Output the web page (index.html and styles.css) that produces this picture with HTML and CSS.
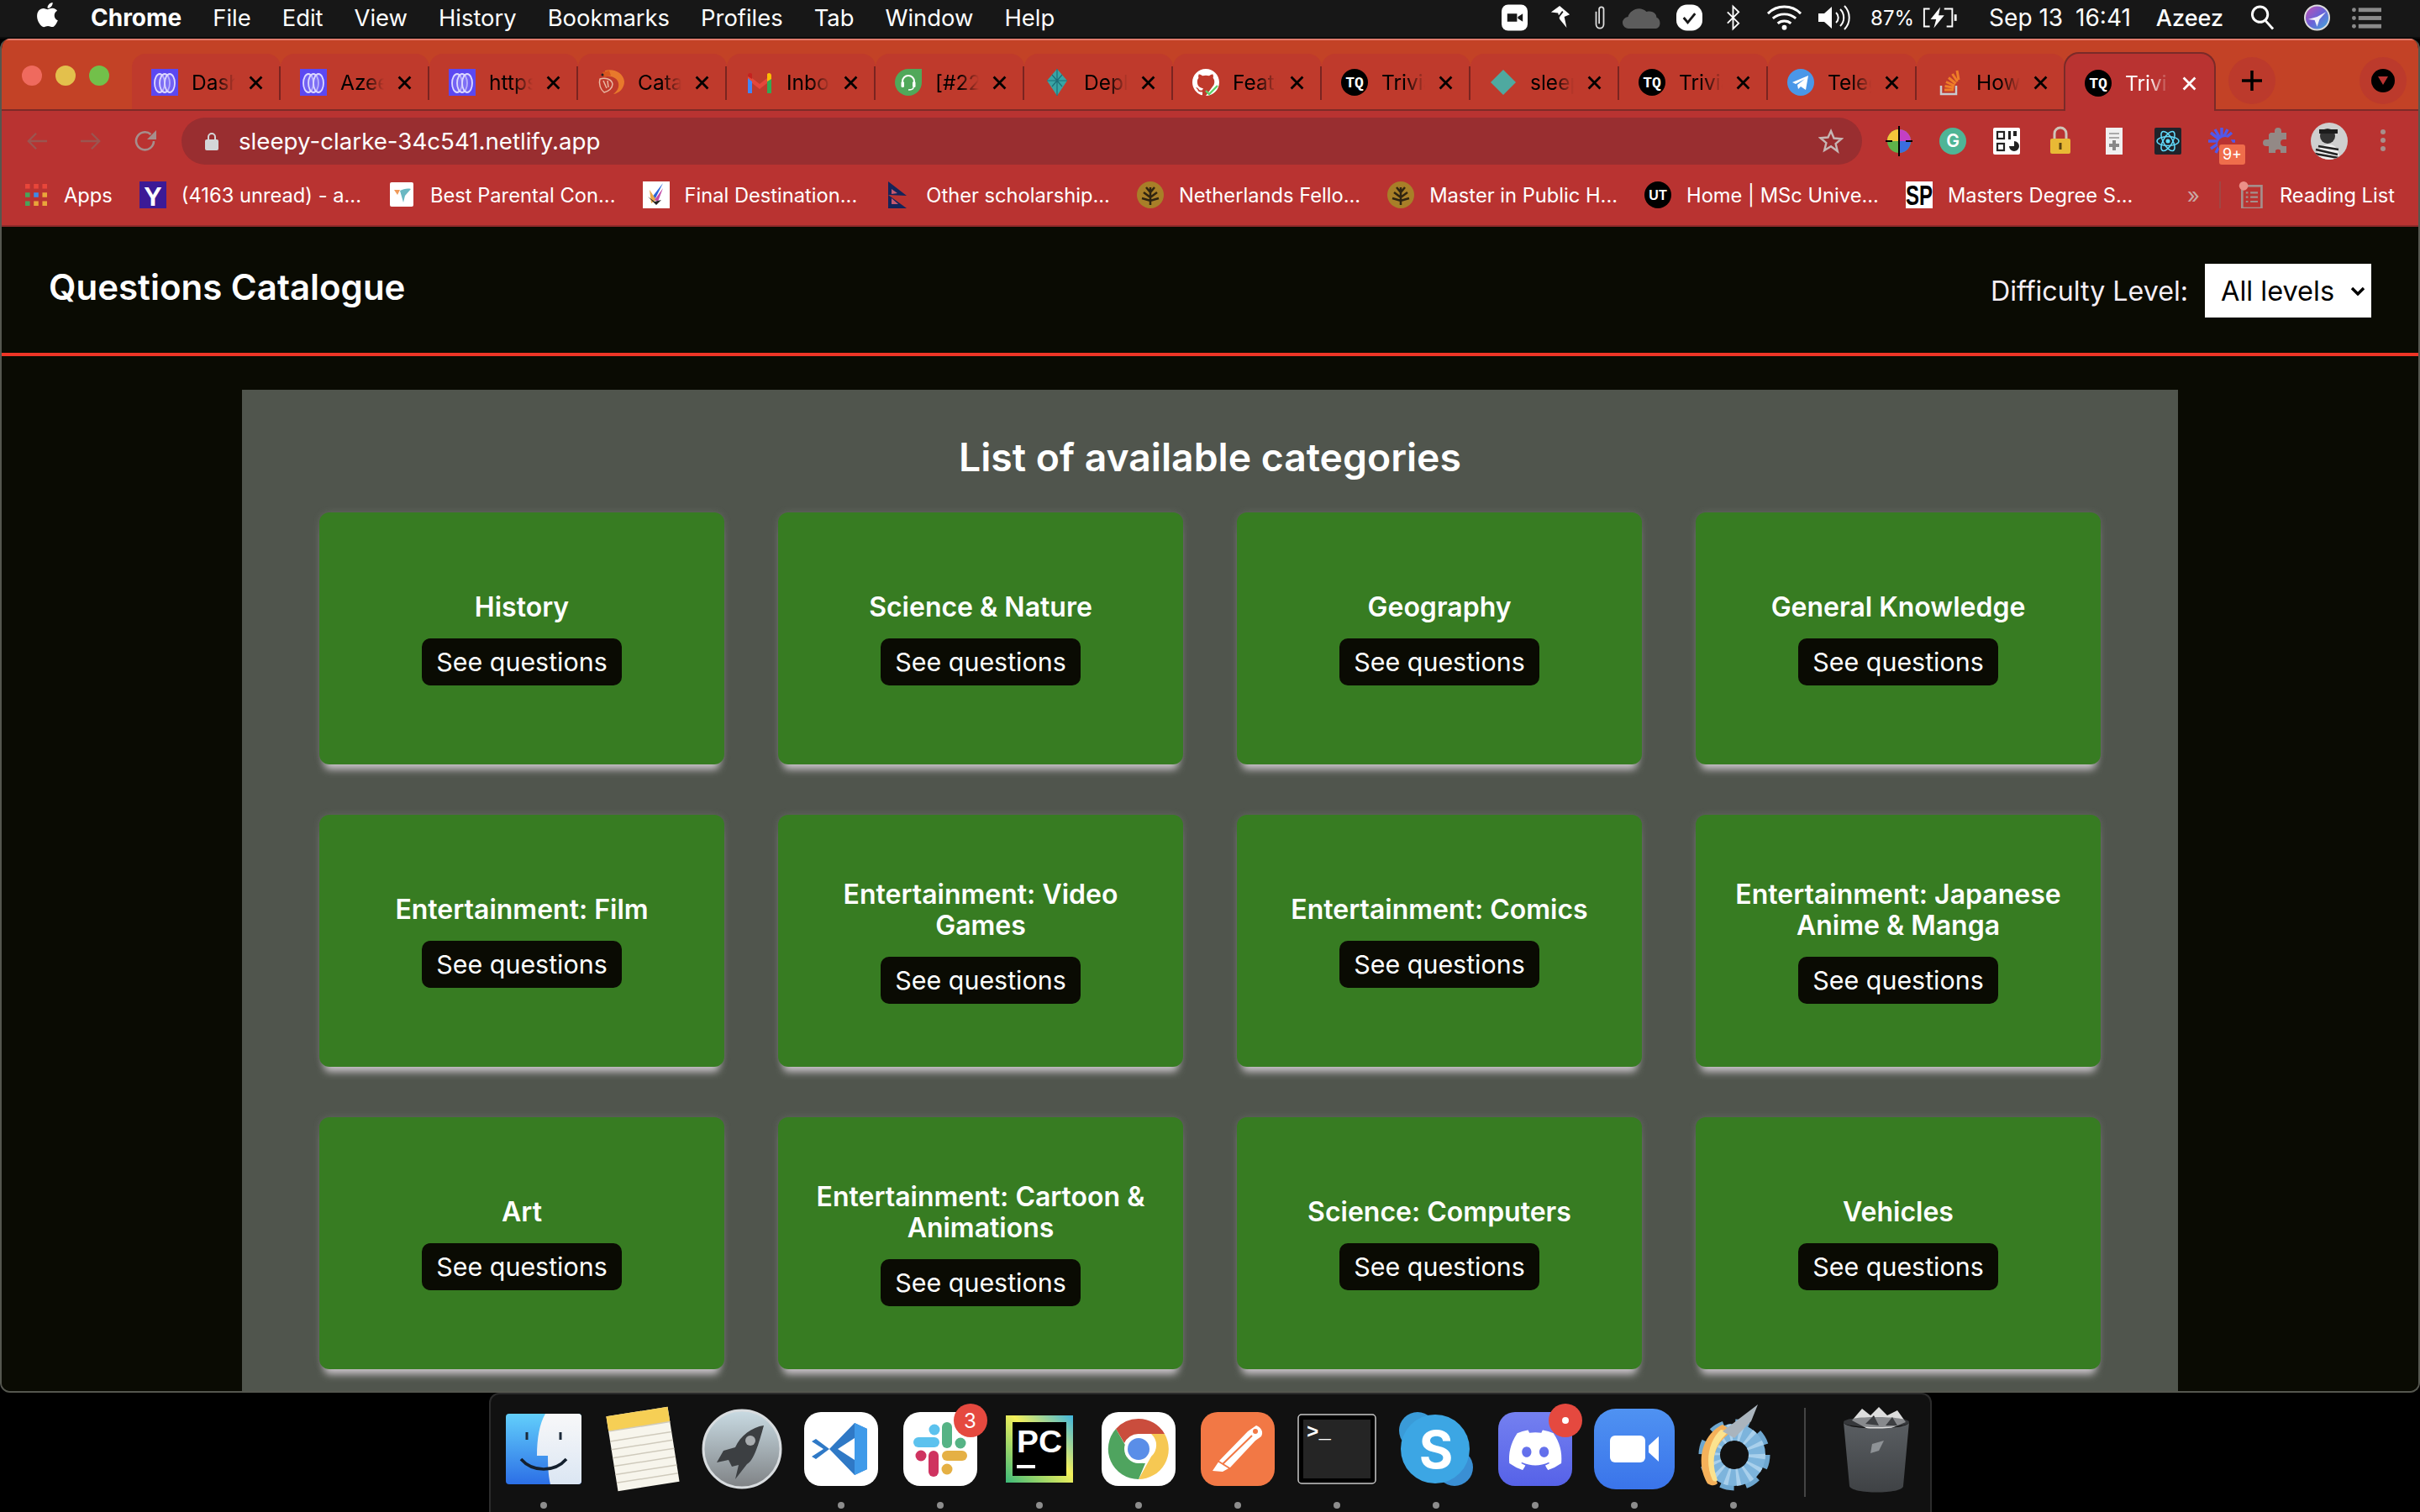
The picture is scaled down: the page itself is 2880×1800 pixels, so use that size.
FILE: index.html
```html
<!DOCTYPE html>
<html lang="en">
<head>
    <meta charset="UTF-8">
    <meta name="viewport" content="width=device-width, initial-scale=1.0">
    <title>Questions Catalogue</title>
    <link rel="stylesheet" href="styles.css">
</head>
<body>
    <svg class="defs" width="0" height="0">
        <symbol id="i-x" viewBox="0 0 16 16"><path d="M1.5 1.5l13 13M14.5 1.5l-13 13" stroke="currentColor" stroke-width="2.6" fill="none"/></symbol>
        <symbol id="i-ms" viewBox="0 0 32 32"><rect width="32" height="32" fill="#5b48f2"/><g fill="#8d80f7" fill-opacity=".45" stroke="#dcd8ff" stroke-width="1.800"><ellipse cx="10" cy="17" rx="6" ry="11"/><ellipse cx="16" cy="17" rx="6" ry="11"/><ellipse cx="22" cy="17" rx="6" ry="11"/></g></symbol>
        <symbol id="i-tq" viewBox="0 0 32 32"><circle cx="16" cy="16" r="16" fill="#000"/><text x="16" y="21.500" font-family="Liberation Mono" font-size="18" font-weight="700" fill="#fff" text-anchor="middle">TQ</text></symbol>
    </svg>

    <div class="menubar">
        <svg class="apple" viewBox="0 0 24 24"><path fill="#fff" d="M17.05 20.28c-.98.95-2.05.8-3.08.35-1.09-.46-2.09-.48-3.24 0-1.44.62-2.2.44-3.06-.35C2.79 15.25 3.51 7.59 9.05 7.31c1.35.07 2.29.74 3.08.8 1.18-.24 2.31-.93 3.57-.84 1.51.12 2.65.72 3.4 1.8-3.12 1.87-2.38 5.98.48 7.13-.57 1.5-1.31 2.99-2.54 4.09zM12.03 7.25c-.15-2.23 1.66-4.07 3.74-4.25.29 2.58-2.34 4.5-3.74 4.25z"/></svg>
        <span class="app-name">Chrome</span>
        <span>File</span>
        <span>Edit</span>
        <span>View</span>
        <span>History</span>
        <span>Bookmarks</span>
        <span>Profiles</span>
        <span>Tab</span>
        <span>Window</span>
        <span>Help</span>
        <div class="menu-right">
            <svg width="31" height="32" viewBox="0 0 32 32"><rect width="32" height="32" rx="8" fill="#fff"/><path d="M7 11h12v10H7zM20 15l6-4v10l-6-4z" fill="#171717"/></svg>
            <svg width="26" height="32" viewBox="0 0 28 32"><path d="M13 1l13 11-7 3 3 14-9-11-2-8-9-1z" fill="#fff"/><path d="M11 16l6-8" stroke="#171717" stroke-width="2"/></svg>
            <svg width="18" height="34" viewBox="0 0 20 34"><path d="M5 9v17a5 5 0 0 0 10 0V6a3 3 0 0 0-6 0v19" fill="none" stroke="#ddd" stroke-width="2"/></svg>
            <svg width="51" height="28" viewBox="0 0 48 28"><path d="M8 27a7 7 0 0 1-1-14c2-8 14-14 22-6 8-2 12 3 12 7 5 1 6 12-1 13z" fill="#5c5c5c"/></svg>
            <svg width="31" height="32" viewBox="0 0 32 32"><rect width="32" height="32" rx="13" fill="#fff"/><path d="M9 16l5 6 9-11" fill="none" stroke="#171717" stroke-width="3"/></svg>
            <svg width="19" height="34" viewBox="0 0 20 34"><path d="M3 10l14 14-7 7V3l7 7L3 24" fill="none" stroke="#fff" stroke-width="2"/></svg>
            <svg width="43" height="32" viewBox="0 0 44 32"><g fill="none" stroke="#fff" stroke-width="3"><path d="M2 11c11-11 29-11 40 0M8 17c8-7 20-7 28 0M14 23c4-4 12-4 16 0"/></g><circle cx="22" cy="28" r="3" fill="#fff"/></svg>
            <svg width="42" height="32" viewBox="0 0 42 32"><path d="M1 11h7l9-8v26l-9-8H1z" fill="#fff"/><g fill="none" stroke="#fff" stroke-width="2"><path d="M22 10a8 8 0 0 1 0 12M27 6a14 14 0 0 1 0 20M32 2a20 20 0 0 1 0 28"/></g></svg>
            <span class="battery-pct">87%</span>
            <svg width="44" height="26" viewBox="0 0 46 26"><path d="M10 2H3v22h7M28 2h10v22h-7" fill="none" stroke="#fff" stroke-width="2"/><path d="M23 0L11 15h7l-3 11 13-16h-7z" fill="#fff"/><path d="M42 9v8" stroke="#fff" stroke-width="3"/></svg>
            <span class="clock">Sep 13</span>
            <span class="clock">16:41</span>
            <span class="user">Azeez</span>
            <svg width="29" height="32" viewBox="0 0 30 32"><circle cx="12" cy="12" r="9.5" fill="none" stroke="#fff" stroke-width="3"/><path d="M19 20l9 10" stroke="#fff" stroke-width="3"/></svg>
            <svg width="31" height="32" viewBox="0 0 32 32"><defs><linearGradient id="siri-g" x1="0" y1="0" x2="1" y2="1"><stop offset="0" stop-color="#c84fb0"/><stop offset=".5" stop-color="#6a62d8"/><stop offset="1" stop-color="#3fb0d8"/></linearGradient></defs><circle cx="16" cy="16" r="15" fill="url(#siri-g)" stroke="#ddd" stroke-width="2"/><path d="M5 18l11-3 11-6-8 9-3 9-3-8z" fill="#fff" opacity=".9"/></svg>
            <svg width="35" height="28" viewBox="0 0 36 28"><g fill="#8a8a8a"><rect x="8" y="2" width="28" height="5"/><rect x="8" y="12" width="28" height="5"/><rect x="8" y="22" width="28" height="5"/><circle cx="2.500" cy="4.500" r="2.500"/><circle cx="2.500" cy="14.500" r="2.500"/><circle cx="2.500" cy="24.500" r="2.500"/></g></svg>
        </div>
    </div>

    <div class="window">
        <div class="tabstrip">
            <div class="traffic">
                <span class="light red"></span>
                <span class="light yellow"></span>
                <span class="light green"></span>
            </div>
            <div class="tabs">
                <div class="tab"><svg class="fav"><use href="#i-ms"/></svg><span class="tab-title">Dashboard</span><svg class="tab-x"><use href="#i-x"/></svg></div>
                <div class="tab"><svg class="fav"><use href="#i-ms"/></svg><span class="tab-title">Azeez</span><svg class="tab-x"><use href="#i-x"/></svg></div>
                <div class="tab"><svg class="fav"><use href="#i-ms"/></svg><span class="tab-title">https://</span><svg class="tab-x"><use href="#i-x"/></svg></div>
                <div class="tab">
                    <svg class="fav" viewBox="0 0 32 32"><path d="M9 2c11-3 22 3 23 13 0 8-6 14-13 15 5-4 7-8 6-13-1-6-8-9-15-8z" fill="#e8792c"/><path d="M6 4l8-2 2 6-8 2z" fill="#d8571f"/><path d="M3 12c6-2 14 0 15 6 0 5-5 9-10 10-4-3-7-10-5-16zM7 14l4 9M12 14l1 8" fill="none" stroke="#e9b9a4" stroke-width="1.500"/><circle cx="6" cy="7" r="1.500" fill="#222"/></svg>
                    <span class="tab-title">Catalogue</span><svg class="tab-x"><use href="#i-x"/></svg>
                </div>
                <div class="tab">
                    <svg class="fav" viewBox="0 0 32 32"><path d="M2 7l14 11L30 7v6L16 24 2 13z" fill="#e4473b"/><path d="M2 11l5 4v14H2z" fill="#4285f4"/><path d="M25 15l5-4v18h-5z" fill="#34a853"/><path d="M25 6c2-2 5-1 5 2v4l-5 3z" fill="#fbbc04"/><path d="M2 8c0-3 3-4 5-2v6L2 9z" fill="#c5221f"/></svg>
                    <span class="tab-title">Inbox</span><svg class="tab-x"><use href="#i-x"/></svg>
                </div>
                <div class="tab">
                    <svg class="fav" viewBox="0 0 32 32"><path d="M16 0h16v16a16 16 0 1 1-16-16z" fill="#50a85a"/><path d="M9 19v-4a7 7 0 0 1 14 0v4" fill="none" stroke="#fff" stroke-width="2"/><rect x="7.500" y="15" width="3.500" height="7" rx="1.500" fill="#fff"/><rect x="21" y="15" width="3.500" height="7" rx="1.500" fill="#fff"/><path d="M22 22c0 3-3 3-6 3" fill="none" stroke="#fff" stroke-width="1.500"/></svg>
                    <span class="tab-title">[#2244</span><svg class="tab-x"><use href="#i-x"/></svg>
                </div>
                <div class="tab">
                    <svg class="fav" viewBox="0 0 32 32"><path d="M16 0l12 14-12 18L4 14z" fill="#38a5a5"/><path d="M16 0v32M4 14h24M10 7l12 14M22 7L10 21" stroke="#1d6e78" stroke-width="1.200"/></svg>
                    <span class="tab-title">Deploy</span><svg class="tab-x"><use href="#i-x"/></svg>
                </div>
                <div class="tab">
                    <svg class="fav" viewBox="0 0 16 16"><path fill="#fff" d="M8 0C3.58 0 0 3.58 0 8c0 3.54 2.29 6.53 5.47 7.59.4.07.55-.17.55-.38 0-.19-.01-.82-.01-1.49-2.01.37-2.53-.49-2.69-.94-.09-.23-.48-.94-.82-1.13-.28-.15-.68-.52-.01-.53.63-.01 1.08.58 1.23.82.72 1.21 1.87.87 2.33.66.07-.52.28-.87.51-1.07-1.78-.2-3.64-.89-3.64-3.95 0-.87.31-1.59.82-2.15-.08-.2-.36-1.02.08-2.12 0 0 .67-.21 2.2.82.64-.18 1.32-.27 2-.27.68 0 1.36.09 2 .27 1.53-1.04 2.2-.82 2.2-.82.44 1.1.16 1.92.08 2.12.51.56.82 1.27.82 2.15 0 1-.2 1.700-.6 2.300L8 16c4.420 0 8-3.580 8-8s-3.580-8-8-8z"/><path d="M8 13l2 2 5-5" fill="none" stroke="#5fd068" stroke-width="1.200"/></svg>
                    <span class="tab-title">Feature</span><svg class="tab-x"><use href="#i-x"/></svg>
                </div>
                <div class="tab"><svg class="fav"><use href="#i-tq"/></svg><span class="tab-title">Trivia</span><svg class="tab-x"><use href="#i-x"/></svg></div>
                <div class="tab">
                    <svg class="fav" viewBox="0 0 32 32"><path d="M16 1l15 15-15 15L1 16z" fill="#4fa9a0"/></svg>
                    <span class="tab-title">sleepy</span><svg class="tab-x"><use href="#i-x"/></svg>
                </div>
                <div class="tab"><svg class="fav"><use href="#i-tq"/></svg><span class="tab-title">Trivia</span><svg class="tab-x"><use href="#i-x"/></svg></div>
                <div class="tab">
                    <svg class="fav" viewBox="0 0 32 32"><circle cx="16" cy="16" r="16" fill="#4a97e8"/><path d="M6 16l19-8-3 17-6-4-3 3-1-5 9-7-11 6z" fill="#fff"/></svg>
                    <span class="tab-title">Telegram</span><svg class="tab-x"><use href="#i-x"/></svg>
                </div>
                <div class="tab">
                    <svg class="fav" viewBox="0 0 32 32"><path d="M6 20v10h18V20" fill="none" stroke="#c8ccd0" stroke-width="2.500"/><g stroke="#ef7d28" stroke-width="3"><path d="M10 25h11M10.500 20.500l11 1.800M12 15.500l10 4.500M15 10.500l8.500 7M19.500 6l6 9M25 2l2 11"/></g></svg>
                    <span class="tab-title">How to</span><svg class="tab-x"><use href="#i-x"/></svg>
                </div>
                <div class="tab tab-active"><svg class="fav"><use href="#i-tq"/></svg><span class="tab-title">Trivia</span><svg class="tab-x"><use href="#i-x"/></svg></div>
            </div>
            <div class="new-tab"><svg width="24" height="24" viewBox="0 0 24 24"><path d="M12 0v24M0 12h24" stroke="#000" stroke-width="3.500"/></svg></div>
            <div class="tab-search"><span class="tab-search-dot"><svg width="12" height="10" viewBox="0 0 12 10"><path d="M0 0h12L6 10z" fill="#b93331"/></svg></span></div>
        </div>

        <div class="toolbar">
            <div class="nav-btns">
                <svg width="26" height="24" viewBox="0 0 28 24"><path d="M27 12H3M13 2L3 12l10 10" fill="none" stroke="#9b5550" stroke-width="2.500"/></svg>
                <svg width="26" height="24" viewBox="0 0 28 24"><path d="M1 12h24M15 2l10 10-10 10" fill="none" stroke="#9b5550" stroke-width="2.500"/></svg>
                <svg width="28" height="28" viewBox="0 0 28 28"><path d="M24 14a10.500 10.500 0 1 1-3.500-8" fill="none" stroke="#a68e8c" stroke-width="2.600"/><path d="M27 1v11H16z" fill="#a68e8c"/></svg>
            </div>
            <div class="omnibox">
                <svg width="16" height="22" viewBox="0 0 16 22"><path d="M4 10V6a4 4 0 0 1 8 0v4" fill="none" stroke="#d4d6d8" stroke-width="2"/><rect y="9" width="16" height="13" rx="2" fill="#d4d6d8"/></svg>
                <span class="url">sleepy-clarke-34c541.netlify.app</span>
                <svg class="star" width="30" height="30" viewBox="0 0 30 30"><path d="M15 3l3.500 8.500 9 .7-6.900 5.900 2.200 8.900L15 21.300 7.200 26l2.200-8.900-6.900-5.900 9-.7z" fill="none" stroke="#c6b6b4" stroke-width="2.400"/></svg>
            </div>
            <div class="extensions">
                <svg width="32" height="36" viewBox="0 0 32 36"><circle cx="16" cy="18" r="14" fill="#5fb34a"/><path d="M16 18V4a14 14 0 0 1 14 14z" fill="#c43fc4"/><path d="M16 18V4A14 14 0 0 0 2 18z" fill="#f4c63a"/><path d="M16 18h14a14 14 0 0 1-14 14z" fill="#3a6ee0"/><path d="M16 0v36M0 18h8M24 18h8" stroke="#000" stroke-width="2"/></svg>
                <svg width="32" height="32" viewBox="0 0 32 32"><circle cx="16" cy="16" r="16" fill="#4fb596"/><text x="16" y="23" font-family="Inter" font-size="21" font-weight="600" fill="#fff" text-anchor="middle">G</text></svg>
                <svg width="32" height="32" viewBox="0 0 32 32"><rect width="32" height="32" rx="2" fill="#fff"/><g fill="none" stroke="#222" stroke-width="2.200"><rect x="5" y="5" width="8" height="8"/><rect x="5" y="19" width="8" height="8"/></g><path d="M18 4h3v10h-3zM24 4h4v6h-4zM19 22a6 6 0 1 0 6-6v6z" fill="#222"/></svg>
                <svg width="26" height="36" viewBox="0 0 26 36"><path d="M6 16V9a7 7 0 0 1 14 0v7" fill="none" stroke="#cfc5b8" stroke-width="3"/><rect x="1" y="15" width="24" height="18" rx="2" fill="#e8b935"/><rect x="11.500" y="20" width="3" height="8" fill="#5a4210"/></svg>
                <svg width="20" height="32" viewBox="0 0 20 32"><rect width="20" height="32" fill="#f0f0f0"/><path d="M4 7h12M4 12h12" stroke="#aaa" stroke-width="2"/><path d="M10 15v12M4 21h12" stroke="#888" stroke-width="4"/></svg>
                <svg width="32" height="32" viewBox="0 0 32 32"><rect width="32" height="32" rx="2" fill="#20232a"/><g fill="none" stroke="#61dafb" stroke-width="1.500"><ellipse cx="16" cy="16" rx="13" ry="5.500"/><ellipse cx="16" cy="16" rx="13" ry="5.500" transform="rotate(60 16 16)"/><ellipse cx="16" cy="16" rx="13" ry="5.500" transform="rotate(120 16 16)"/></g><circle cx="16" cy="16" r="2.500" fill="#61dafb"/></svg>
                <span class="ext-hub">
                    <svg width="32" height="32" viewBox="0 0 32 32"><g stroke="#5158ea" stroke-width="3.500"><path d="M16 16V0M16 16l7-14M16 16l12-10M16 16H32M16 16H0M16 16L3 6M16 16L8 2M16 16L3 25M16 16L9 30"/></g><circle cx="20" cy="20" r="9" fill="#b93331"/></svg>
                    <span class="ext-badge">9+</span>
                </span>
                <svg width="30" height="32" viewBox="0 0 30 32"><path d="M9 6h5V4a4 4 0 0 1 8 0v2h6v8h-3a4 4 0 0 0 0 8h3v8h-7v-3a4 4 0 0 0-6 0v3H7v-8H4a4 4 0 0 1 0-8h3V8z" fill="#938986"/></svg>
                <svg width="44" height="44" viewBox="0 0 44 44"><clipPath id="av-clip"><circle cx="22" cy="22" r="22"/></clipPath><g clip-path="url(#av-clip)"><rect width="44" height="44" fill="#cfcfcf"/><circle cx="20" cy="16" r="9" fill="#333"/><path d="M6 44c0-12 8-18 16-18s12 8 12 18z" fill="#eee"/><path d="M6 32l26 6M5 37l28 5M9 28l24 4" stroke="#222" stroke-width="2.500"/><path d="M10 8h22v5H10z" fill="#1c1c1c"/></g></svg>
                <svg width="8" height="32" viewBox="0 0 8 32"><g fill="#a88f8c"><circle cx="4" cy="5" r="3"/><circle cx="4" cy="15" r="3"/><circle cx="4" cy="25" r="3"/></g></svg>
            </div>
        </div>

        <div class="bookmarks">
            <div class="bm bm-apps">
                <svg class="bm-icon" viewBox="0 0 28 28"><g><rect width="6" height="6" fill="#e8463a"/><rect x="11" width="6" height="6" fill="#e8463a"/><rect x="22" width="6" height="6" fill="#e8463a"/><rect y="11" width="6" height="6" fill="#4aa35a"/><rect x="11" y="11" width="6" height="6" fill="#3f8ae6"/><rect x="22" y="11" width="6" height="6" fill="#eaa53a"/><rect y="22" width="6" height="6" fill="#4aa35a"/><rect x="11" y="22" width="6" height="6" fill="#eaa53a"/><rect x="22" y="22" width="6" height="6" fill="#eaa53a"/></g></svg>
                <span>Apps</span>
            </div>
            <div class="bm">
                <svg class="bm-icon" viewBox="0 0 32 32"><rect width="32" height="32" fill="#3c1a96"/><text x="16" y="29" font-family="Liberation Sans" font-size="32" font-weight="700" fill="#fff" text-anchor="middle">Y</text></svg>
                <span>(4163 unread) - a...</span>
            </div>
            <div class="bm">
                <svg class="bm-icon" viewBox="0 0 32 32"><rect x="2" y="1" width="28" height="29" rx="2" fill="#fff"/><path d="M7 10h7l-3 6z" fill="#ef9a5a"/><path d="M14 11c4-2 9-3 13-2l-7 8-2 8z" fill="#6ab8c2"/></svg>
                <span>Best Parental Con...</span>
            </div>
            <div class="bm">
                <svg class="bm-icon" viewBox="0 0 32 32"><rect width="32" height="32" fill="#fff"/><path d="M24 2L10 20l4 2z" fill="#2a64d8"/><path d="M8 10l8 12-6 4z" fill="#e8a94a"/><path d="M24 8l-6 16-4-2z" fill="#c34ca8"/><path d="M6 18l8 6 8-2-6 6z" fill="#222"/></svg>
                <span>Final Destination...</span>
            </div>
            <div class="bm">
                <svg class="bm-icon" viewBox="0 0 32 32"><path d="M5 0l22 17L5 16zM5 16l22 16H5z" fill="#14245a"/><path d="M9 9l7 5-7 1zM9 20l8 7H9z" fill="#c45a70"/></svg>
                <span>Other scholarship...</span>
            </div>
            <div class="bm">
                <svg class="bm-icon" viewBox="0 0 32 32"><circle cx="16" cy="16" r="16" fill="#a87f28"/><path d="M16 7v21M8 13l8 6 8-6M11 7l5 6 5-6M6 20l10 3 10-3" fill="none" stroke="#2f2410" stroke-width="2.500"/></svg>
                <span>Netherlands Fello...</span>
            </div>
            <div class="bm">
                <svg class="bm-icon" viewBox="0 0 32 32"><circle cx="16" cy="16" r="16" fill="#a87f28"/><path d="M16 7v21M8 13l8 6 8-6M11 7l5 6 5-6M6 20l10 3 10-3" fill="none" stroke="#2f2410" stroke-width="2.500"/></svg>
                <span>Master in Public H...</span>
            </div>
            <div class="bm">
                <svg class="bm-icon" viewBox="0 0 32 32"><circle cx="16" cy="16" r="16" fill="#000"/><text x="16" y="22" font-family="Liberation Sans" font-size="16" font-weight="700" fill="#fff" text-anchor="middle">UT</text></svg>
                <span>Home | MSc Unive...</span>
            </div>
            <div class="bm">
                <svg class="bm-icon" viewBox="0 0 32 32"><rect width="32" height="32" fill="#fff"/><text x="16" y="28" font-family="Liberation Sans" font-size="33" font-weight="700" fill="#000" text-anchor="middle" textLength="32" lengthAdjust="spacingAndGlyphs">SP</text></svg>
                <span>Masters Degree S...</span>
            </div>
            <span class="bm-more">»</span>
            <div class="bm bm-reading">
                <svg class="bm-icon" viewBox="0 0 32 36"><rect x="4" y="6" width="26" height="30" fill="none" stroke="#a58f8c" stroke-width="3"/><path d="M15 15h10M15 21h10M15 27h10M9 15h3M9 21h3M9 27h3" stroke="#a58f8c" stroke-width="2.500"/><circle cx="6" cy="6" r="6" fill="#ec9088"/></svg>
                <span>Reading List</span>
            </div>
        </div>

        <div class="page">
            <header class="page-header">
                <h1>Questions Catalogue</h1>
                <div class="filter">
                    <label for="difficulty">Difficulty Level:</label>
                    <div class="select-wrap">
                        <select id="difficulty">
                            <option>All levels</option>
                        </select>
                        <svg class="chevron" width="18" height="11" viewBox="0 0 18 11"><path d="M2 2l7 7 7-7" fill="none" stroke="#000" stroke-width="3.400"/></svg>
                    </div>
                </div>
            </header>
            <main class="panel">
                <h2>List of available categories</h2>
                <div class="grid">
                    <div class="card"><h3>History</h3><button>See questions</button></div>
                    <div class="card"><h3>Science &amp; Nature</h3><button>See questions</button></div>
                    <div class="card"><h3>Geography</h3><button>See questions</button></div>
                    <div class="card"><h3>General Knowledge</h3><button>See questions</button></div>
                    <div class="card"><h3>Entertainment: Film</h3><button>See questions</button></div>
                    <div class="card"><h3>Entertainment: Video Games</h3><button>See questions</button></div>
                    <div class="card"><h3>Entertainment: Comics</h3><button>See questions</button></div>
                    <div class="card"><h3>Entertainment: Japanese Anime &amp; Manga</h3><button>See questions</button></div>
                    <div class="card"><h3>Art</h3><button>See questions</button></div>
                    <div class="card"><h3>Entertainment: Cartoon &amp; Animations</h3><button>See questions</button></div>
                    <div class="card"><h3>Science: Computers</h3><button>See questions</button></div>
                    <div class="card"><h3>Vehicles</h3><button>See questions</button></div>
                </div>
            </main>
        </div>
    </div>

    <div class="dock">
        <div class="dock-item on">
            <div class="dock-icon"><svg width="90" height="84" viewBox="0 0 90 84"><defs><linearGradient id="fd-a" x1="0" y1="0" x2="0" y2="1"><stop offset="0" stop-color="#62cffb"/><stop offset="1" stop-color="#2c6fe6"/></linearGradient><linearGradient id="fd-b" x1="0" y1="0" x2="0" y2="1"><stop offset="0" stop-color="#f8f8f9"/><stop offset="1" stop-color="#dbe6f3"/></linearGradient></defs><rect width="90" height="84" rx="4" fill="url(#fd-a)"/><path d="M47 0h39a4 4 0 0 1 4 4v76a4 4 0 0 1-4 4H53c-2-8-3-18-3-34H37c0-20 3-38 10-50z" fill="url(#fd-b)"/><path d="M25 22v9M65 22v9" stroke="#1c2a3a" stroke-width="3"/><path d="M18 54c14 16 40 16 54 0" fill="none" stroke="#14202e" stroke-width="3.500"/></svg></div>
            <span class="dock-dot"></span>
        </div>
        <div class="dock-item">
            <div class="dock-icon"><svg width="90" height="102" viewBox="0 0 90 102"><g transform="rotate(-9 45 51)"><rect x="8" y="6" width="74" height="90" fill="#f7f5ec"/><rect x="8" y="6" width="74" height="18" fill="#f6cf55"/><path d="M8 24h74M8 36h74M8 46h74M8 56h74M8 66h74M8 76h74M8 86h74" stroke="#cfcabc" stroke-width="1.500"/></g></svg></div>
            <span class="dock-dot"></span>
        </div>
        <div class="dock-item">
            <div class="dock-icon"><svg width="96" height="96" viewBox="0 0 96 96"><defs><linearGradient id="lp-g" x1="0" y1="0" x2="0" y2="1"><stop offset="0" stop-color="#c9dbe3"/><stop offset="1" stop-color="#7f8285"/></linearGradient></defs><circle cx="48" cy="48" r="46" fill="url(#lp-g)" stroke="#d8dcdf" stroke-width="3"/><path d="M74 20c-14 2-28 12-34 26l-14 4-8 14 14-3 4 8 8-2-4 17 14-18c8-4 14-24 20-46z" fill="#3c3f42"/><circle cx="58" cy="38" r="6" fill="#a9adb0"/></svg></div>
            <span class="dock-dot"></span>
        </div>
        <div class="dock-item on">
            <div class="dock-icon"><svg width="88" height="88" viewBox="0 0 88 88"><rect width="88" height="88" rx="20" fill="#fff"/><path d="M60 13L30 44 14 32l-5 3 14 9-14 9 5 3 16-12 30 31 15-7V20z" fill="#2f79c6"/><path d="M60 13l15 7v48l-15 7z" fill="#3f9ae9"/><path d="M60 31L40 44l20 13z" fill="#fff"/></svg></div>
            <span class="dock-dot"></span>
        </div>
        <div class="dock-item on">
            <div class="dock-icon"><svg width="88" height="88" viewBox="0 0 88 88"><rect width="88" height="88" rx="20" fill="#fff"/><g stroke-width="12" stroke-linecap="round" fill="none"><path d="M37 21v0" stroke="#5cc2ee" stroke-width="13"/><path d="M18 36h19" stroke="#5cc2ee"/><path d="M52 18v19" stroke="#55b385"/><path d="M68 37v0" stroke="#55b385" stroke-width="13"/><path d="M21 52v0" stroke="#cf3360" stroke-width="13"/><path d="M36 52v19" stroke="#cf3360"/><path d="M52 52h18" stroke="#e5b044"/><path d="M52 68v0" stroke="#e5b044" stroke-width="13"/></g></svg></div>
            <span class="dock-badge">3</span>
            <span class="dock-dot"></span>
        </div>
        <div class="dock-item on">
            <div class="dock-icon"><svg width="80" height="80" viewBox="0 0 80 80"><defs><linearGradient id="pc-g" x1="0" y1="1" x2="1" y2="0"><stop offset="0" stop-color="#3bb97a"/><stop offset=".55" stop-color="#f5f05a"/><stop offset="1" stop-color="#3fb6e0"/></linearGradient></defs><rect width="80" height="80" fill="url(#pc-g)"/><rect x="8" y="8" width="64" height="64" fill="#000"/><text x="13" y="44" font-family="Liberation Sans" font-size="36" font-weight="700" fill="#fff" textLength="54" lengthAdjust="spacingAndGlyphs">PC</text><rect x="13" y="59" width="22" height="4" fill="#fff"/></svg></div>
            <span class="dock-dot"></span>
        </div>
        <div class="dock-item on">
            <div class="dock-icon"><svg width="88" height="88" viewBox="0 0 88 88"><rect width="88" height="88" rx="20" fill="#fff"/><path d="M44 8a36 36 0 0 1 31 18H44a18 18 0 0 0-17 11L17 20A36 36 0 0 1 44 8z" fill="#ca4d3d"/><path d="M75 26a36 36 0 0 1-31 54l15-27a18 18 0 0 0 0-27z" fill="#f6c853"/><path d="M17 20l16 28a18 18 0 0 0 19 13L44 80A36 36 0 0 1 17 20z" fill="#4fa45f"/><circle cx="44" cy="44" r="17" fill="#fff"/><circle cx="44" cy="44" r="13" fill="#5a8ee8"/></svg></div>
            <span class="dock-dot"></span>
        </div>
        <div class="dock-item on">
            <div class="dock-icon"><svg width="88" height="88" viewBox="0 0 88 88"><rect width="88" height="88" rx="20" fill="#f27845"/><path d="M66 16c6 2 9 8 6 13l-7 5-30 32-9 5-12-1 8-12 34-35z" fill="#fff"/><path d="M26 62l35-34M36 68L20 58" stroke="#f27845" stroke-width="2"/><circle cx="65" cy="23" r="3" fill="#f27845"/></svg></div>
            <span class="dock-dot"></span>
        </div>
        <div class="dock-item on">
            <div class="dock-icon"><svg width="94" height="84" viewBox="0 0 94 84"><rect x="1" y="1" width="92" height="82" rx="4" fill="#000" stroke="#c8c8c8" stroke-width="1.500"/><rect x="7" y="7" width="80" height="70" fill="#252525"/><text x="11" y="29" font-family="Liberation Mono" font-size="24" font-weight="700" fill="#fff">&gt;_</text></svg></div>
            <span class="dock-dot"></span>
        </div>
        <div class="dock-item on">
            <div class="dock-icon"><svg width="88" height="88" viewBox="0 0 88 88"><circle cx="22" cy="22" r="22" fill="#3a9bd8"/><circle cx="66" cy="66" r="22" fill="#3a8fd4"/><circle cx="43" cy="44" r="41" fill="#3ca6e4"/><text x="44" y="67" font-family="Inter" font-size="62" font-weight="700" fill="#fff" text-anchor="middle">S</text></svg></div>
            <span class="dock-dot"></span>
        </div>
        <div class="dock-item on">
            <div class="dock-icon"><svg width="88" height="88" viewBox="0 0 88 88"><defs><linearGradient id="dc-g" x1="0" y1="0" x2="0" y2="1"><stop offset="0" stop-color="#7480f0"/><stop offset="1" stop-color="#5662e8"/></linearGradient></defs><rect width="88" height="88" rx="20" fill="url(#dc-g)"/><g transform="translate(13 14) scale(2.600)"><path fill="#fff" d="M20.317 4.37a19.791 19.791 0 0 0-4.885-1.515.074.074 0 0 0-.079.037c-.21.375-.444.864-.608 1.25a18.27 18.27 0 0 0-5.487 0 12.64 12.64 0 0 0-.617-1.25.077.077 0 0 0-.079-.037A19.736 19.736 0 0 0 3.677 4.37a.07.07 0 0 0-.032.027C.533 9.046-.32 13.58.099 18.057a.082.082 0 0 0 .031.057 19.9 19.9 0 0 0 5.993 3.03.078.078 0 0 0 .084-.028 14.09 14.09 0 0 0 1.226-1.994.076.076 0 0 0-.041-.106 13.107 13.107 0 0 1-1.872-.892.077.077 0 0 1-.008-.128 10.2 10.2 0 0 0 .372-.292.074.074 0 0 1 .077-.01c3.928 1.793 8.18 1.793 12.062 0a.074.074 0 0 1 .078.01c.12.098.246.198.373.292a.077.077 0 0 1-.006.127 12.299 12.299 0 0 1-1.873.892.077.077 0 0 0-.041.107c.36.698.772 1.362 1.225 1.993a.076.076 0 0 0 .084.028 19.839 19.839 0 0 0 6.002-3.03.077.077 0 0 0 .032-.054c.5-5.177-.838-9.674-3.549-13.66a.061.061 0 0 0-.031-.03zM8.02 15.33c-1.183 0-2.157-1.085-2.157-2.419 0-1.333.956-2.419 2.157-2.419 1.21 0 2.176 1.096 2.157 2.42 0 1.333-.956 2.418-2.157 2.418zm7.975 0c-1.183 0-2.157-1.085-2.157-2.419 0-1.333.955-2.419 2.157-2.419 1.21 0 2.176 1.096 2.157 2.42 0 1.333-.946 2.418-2.157 2.418z"/></g></svg></div>
            <span class="dock-badge dock-badge-dot"></span>
            <span class="dock-dot"></span>
        </div>
        <div class="dock-item on">
            <div class="dock-icon"><svg width="96" height="96" viewBox="0 0 96 96"><defs><linearGradient id="zm-g" x1="0" y1="0" x2="0" y2="1"><stop offset="0" stop-color="#4f92f2"/><stop offset="1" stop-color="#3a74ea"/></linearGradient></defs><rect width="96" height="96" rx="26" fill="url(#zm-g)"/><rect x="19" y="32" width="42" height="32" rx="6" fill="#fff"/><path d="M65 44l12-11v30L65 52z" fill="#fff"/></svg></div>
            <span class="dock-dot"></span>
        </div>
        <div class="dock-item on">
            <div class="dock-icon"><svg width="98" height="110" viewBox="0 0 98 110"><circle cx="50" cy="62" r="38" fill="none" stroke="#6ea7d0" stroke-width="9" stroke-dasharray="16 14"/><circle cx="50" cy="62" r="27" fill="none" stroke="#7db4dc" stroke-width="20"/><circle cx="50" cy="62" r="27" fill="none" stroke="#a9d0ec" stroke-width="20" stroke-dasharray="4 8"/><path d="M36 26C14 36 2 68 18 96c6 4 10 2 12 0-10-22-6-48 18-62z" fill="#f5b15a"/><path d="M34 32C20 44 14 70 24 92c2 2 4 2 6 0-8-20-6-42 14-58z" fill="#fbe28e"/><path d="M36 34L78 2 70 22 50 42z" fill="#aab4bd"/></svg></div>
            <span class="dock-dot"></span>
        </div>
        <div class="dock-sep"></div>
        <div class="dock-item">
            <div class="dock-icon"><svg width="78" height="104" viewBox="0 0 78 104"><defs><linearGradient id="tr-g" x1="0" y1="0" x2="0" y2="1"><stop offset="0" stop-color="#5a5e62"/><stop offset="1" stop-color="#3f4245"/></linearGradient></defs><path d="M10 18l12-14 10 8 10-10 10 10 12-6 10 14-34 14z" fill="#ddd"/><path d="M26 22l10-10 6 12zM50 24l8-10 6 10z" fill="#222"/><path d="M0 20c0 10 78 10 78 0l-7 76c0 10-62 10-64 0z" fill="url(#tr-g)"/><path d="M0 20c0-8 78-8 78 0s-78 8-78 0z" fill="#505459" opacity=".6"/><path d="M34 46l14-4-6 12-10 3z" fill="#8e9296"/></svg></div>
            <span class="dock-dot"></span>
        </div>
    </div>
</body>
</html>
```

FILE: styles.css
```css
* {
    box-sizing: border-box;
}
html, body {
    height: 100%;
}
body {
    margin: 0;
    display: flex;
    flex-direction: column;
    height: 1800px;
    overflow: hidden;
    background: #000;
    font-family: Inter, "Noto Sans", sans-serif;
    color: #fff;
}
.defs {
    position: absolute;
}

/* mac menu bar */
.menubar {
    display: flex;
    align-items: center;
    flex: 0 0 46px;
    height: 46px;
    padding: 0 46px 2px 37px;
    background: #171717;
    border-bottom: 2px solid #0c0c0c;
    font-size: 27.400px;
    gap: 37px;
}
.apple {
    width: 39px;
    height: 39px;
    margin: -7px -5px 0 0;
}
.app-name {
    font-size: 28px;
    font-weight: 700;
}
.menu-right {
    display: flex;
    align-items: center;
    margin-left: auto;
    font-size: 27px;
}
.menu-right > :nth-child(2) { margin-left: 26px; }
.menu-right > :nth-child(3) { margin-left: 25px; }
.menu-right > :nth-child(4) { margin-left: 16px; }
.menu-right > :nth-child(5) { margin-left: 15px; }
.menu-right > :nth-child(6) { margin-left: 27px; }
.menu-right > :nth-child(7) { margin-left: 30px; }
.menu-right > :nth-child(8) { margin-left: 18px; }
.menu-right > :nth-child(9) { margin-left: 21px; }
.menu-right > :nth-child(10) { margin-left: 9px; }
.menu-right > :nth-child(11) { margin-left: 36px; }
.menu-right > :nth-child(12) { margin-left: 15px; }
.menu-right > :nth-child(13) { margin-left: 30px; }
.menu-right > :nth-child(14) { margin-left: 32px; }
.menu-right > :nth-child(15) { margin-left: 35px; }
.menu-right > :nth-child(16) { margin-left: 26px; }
.battery-pct {
    font-size: 24px;
}
.clock {
    font-size: 28px;
}
.user {
    font-weight: 500;
}

/* browser window */
.window {
    flex: 0 0 1612px;
    display: flex;
    flex-direction: column;
    overflow: hidden;
    border-radius: 12px;
    border: 2px solid #55574f;
    border-top: 0;
    background: #0a0b03;
}
.tabstrip {
    display: flex;
    flex: 0 0 86px;
    height: 86px;
    background: #c34226;
    border-top: 2px solid #e0796a;
    border-bottom: 2px solid #7e2a27;
    position: relative;
}
.traffic {
    display: flex;
    align-items: center;
    gap: 16px;
    width: 155px;
    height: 84px;
    padding-left: 24px;
}
.light {
    width: 24px;
    height: 24px;
    border-radius: 50%;
}
.red { background: #ef6a5e; }
.yellow { background: #e3c04c; }
.green { background: #72c04a; }

.tabs {
    display: flex;
    align-items: flex-end;
    height: 82px;
}
.tab {
    display: flex;
    align-items: center;
    position: relative;
    width: 177px;
    height: 66px;
    padding: 2px 22px 0 23px;
    border-radius: 16px 16px 0 0;
    background: #bf3a2c;
    color: #000;
}
.tab:not(:nth-last-child(-n+2))::after {
    content: "";
    position: absolute;
    right: 0;
    top: 15px;
    height: 40px;
    width: 2px;
    background: #7a2420;
}
.fav {
    flex: 0 0 32px;
    width: 32px;
    height: 32px;
}
.tab-title {
    flex: 0 0 52px;
    width: 52px;
    margin-left: 16px;
    overflow: hidden;
    white-space: nowrap;
    font-size: 24.500px;
    -webkit-mask-image: linear-gradient(90deg, #000 55%, transparent);
    mask-image: linear-gradient(90deg, #000 55%, transparent);
}
.tab-x {
    flex: 0 0 17px;
    width: 17px;
    height: 17px;
    margin-left: 16px;
}
.tab-active {
    height: 68px;
    margin-bottom: -2px;
    background: #b93331;
    color: #fff;
    box-shadow: 0 0 0 2px #7a2a28;
    clip-path: inset(-3px -3px 0 -3px);
}
.new-tab {
    position: absolute;
    left: 2650px;
    top: 20px;
    display: flex;
    align-items: center;
    justify-content: center;
    width: 56px;
    height: 56px;
    border-radius: 50%;
    background: #bc3a2c;
}
.tab-search {
    position: absolute;
    left: 2806px;
    top: 20px;
    display: flex;
    align-items: center;
    justify-content: center;
    width: 56px;
    height: 56px;
    border-radius: 50%;
    background: #bc3a2c;
}
.tab-search-dot {
    display: flex;
    align-items: center;
    justify-content: center;
    width: 28px;
    height: 28px;
    border-radius: 50%;
    background: #000;
}

/* toolbar */
.toolbar {
    display: flex;
    align-items: center;
    flex: 0 0 72px;
    height: 72px;
    background: #b93331;
}
.nav-btns {
    display: flex;
    align-items: center;
    gap: 38px;
    width: 214px;
    padding-left: 29px;
}
.omnibox {
    display: flex;
    align-items: center;
    flex: 0 0 2000px;
    height: 56px;
    padding: 0 22px 0 28px;
    border-radius: 28px;
    background: #992e30;
}
.url {
    margin-left: 24px;
    font-size: 27.700px;
}
.star {
    margin-left: auto;
}
.extensions {
    display: grid;
    grid-template-columns: repeat(10, 64px);
    align-items: center;
    justify-items: center;
    padding-left: 12px;
}
.ext-hub {
    position: relative;
    display: flex;
}
.ext-badge {
    position: absolute;
    left: 13px;
    top: 20px;
    width: 31px;
    height: 24px;
    border-radius: 3px;
    background: #ef6d4b;
    font-size: 18px;
    line-height: 24px;
    text-align: center;
}

/* bookmarks */
.bookmarks {
    display: flex;
    align-items: center;
    flex: 0 0 66px;
    height: 66px;
    padding: 0 0 8px 28px;
    background: #b93331;
    border-bottom: 2px solid #8f2a2a;
    font-size: 23.700px;
    gap: 32px;
}
.bm {
    display: flex;
    align-items: center;
    gap: 18px;
    white-space: nowrap;
}
.bm-icon {
    width: 32px;
    height: 32px;
    flex: 0 0 32px;
}
.bm-apps {
    gap: 20px;
}
.bm-apps .bm-icon {
    width: 26px;
    height: 26px;
    flex-basis: 26px;
}
.bm-more {
    margin: 0 -9px 0 auto;
    color: #c9a9a5;
    font-size: 26px;
}
.bm-reading {
    padding-left: 20px;
    padding-right: 28px;
    border-left: 2px solid #a04744;
}

/* the page itself */
.page {
    flex: 1;
    min-height: 0;
    overflow: hidden;
    background: #0a0b03;
}
.page-header {
    display: flex;
    align-items: center;
    justify-content: space-between;
    height: 154px;
    padding: 0 56px 8px;
    border-bottom: 4px solid #ee3526;
}
h1 {
    margin: 0;
    font-size: 42px;
    font-weight: 600;
}
.filter {
    display: flex;
    align-items: center;
    gap: 20px;
    margin-top: 10px;
    font-size: 32.200px;
    color: #f5eef5;
}
.select-wrap {
    position: relative;
    display: flex;
}
.filter select {
    width: 198px;
    height: 64px;
    padding: 0 0 0 19px;
    border: 0;
    border-radius: 0;
    background: #fff;
    color: #000;
    font-family: inherit;
    font-size: 32.500px;
    appearance: none;
    -webkit-appearance: none;
}
.chevron {
    position: absolute;
    right: 7px;
    top: 27px;
    pointer-events: none;
}
.panel {
    width: 2304px;
    margin: 40px auto 0;
    padding: 0 92px 60px;
    background: #50554d;
}
h2 {
    display: flex;
    align-items: center;
    justify-content: center;
    margin: 0;
    height: 146px;
    padding-top: 14px;
    font-size: 46.300px;
    font-weight: 600;
}
.grid {
    display: grid;
    grid-template-columns: repeat(4, 482px);
    gap: 60px 64px;
}
.card {
    display: flex;
    flex-direction: column;
    align-items: center;
    justify-content: center;
    height: 300px;
    padding: 0 40px;
    border-radius: 12px;
    background: #377c22;
    box-shadow: 0 12px 10px -6px #c9c3c9, 0 0 8px rgba(190, 190, 190, 0.18);
}
h3 {
    margin: 0 0 19px;
    font-size: 32px;
    line-height: 37px;
    font-weight: 600;
    text-align: center;
}
.card button {
    height: 56px;
    padding: 0 17px;
    border: 0;
    border-radius: 10px;
    background: #0a0b03;
    color: #fff;
    font-family: inherit;
    font-size: 30.400px;
}

/* dock */
.dock {
    display: flex;
    flex: 0 0 142px;
    width: 1717px;
    height: 142px;
    margin: 0 auto;
    padding: 10px 7px 0 4px;
    border: 2px solid #2c2c2c;
    border-bottom: 0;
    border-radius: 12px 12px 0 0;
    background: #111;
}
.dock-item {
    position: relative;
    display: flex;
    flex-direction: column;
    align-items: center;
    flex: 0 0 118px;
    width: 118px;
}
.dock-icon {
    display: flex;
    align-items: center;
    justify-content: center;
    height: 110px;
}
.dock-dot {
    width: 8px;
    height: 8px;
    margin-top: 8px;
    border-radius: 50%;
    background: #8d8d8d;
    visibility: hidden;
}
.on .dock-dot {
    visibility: visible;
}
.dock-badge {
    position: absolute;
    right: 3px;
    top: 1px;
    display: flex;
    align-items: center;
    justify-content: center;
    width: 40px;
    height: 40px;
    border-radius: 50%;
    background: #e5493f;
    font-size: 24px;
}
.dock-badge-dot::before {
    content: "";
    width: 8px;
    height: 8px;
    border-radius: 50%;
    background: #fff;
}
.dock-sep {
    flex: 0 0 2px;
    width: 2px;
    height: 106px;
    margin: 6px 25px 0 25px;
    background: #444;
}
```
